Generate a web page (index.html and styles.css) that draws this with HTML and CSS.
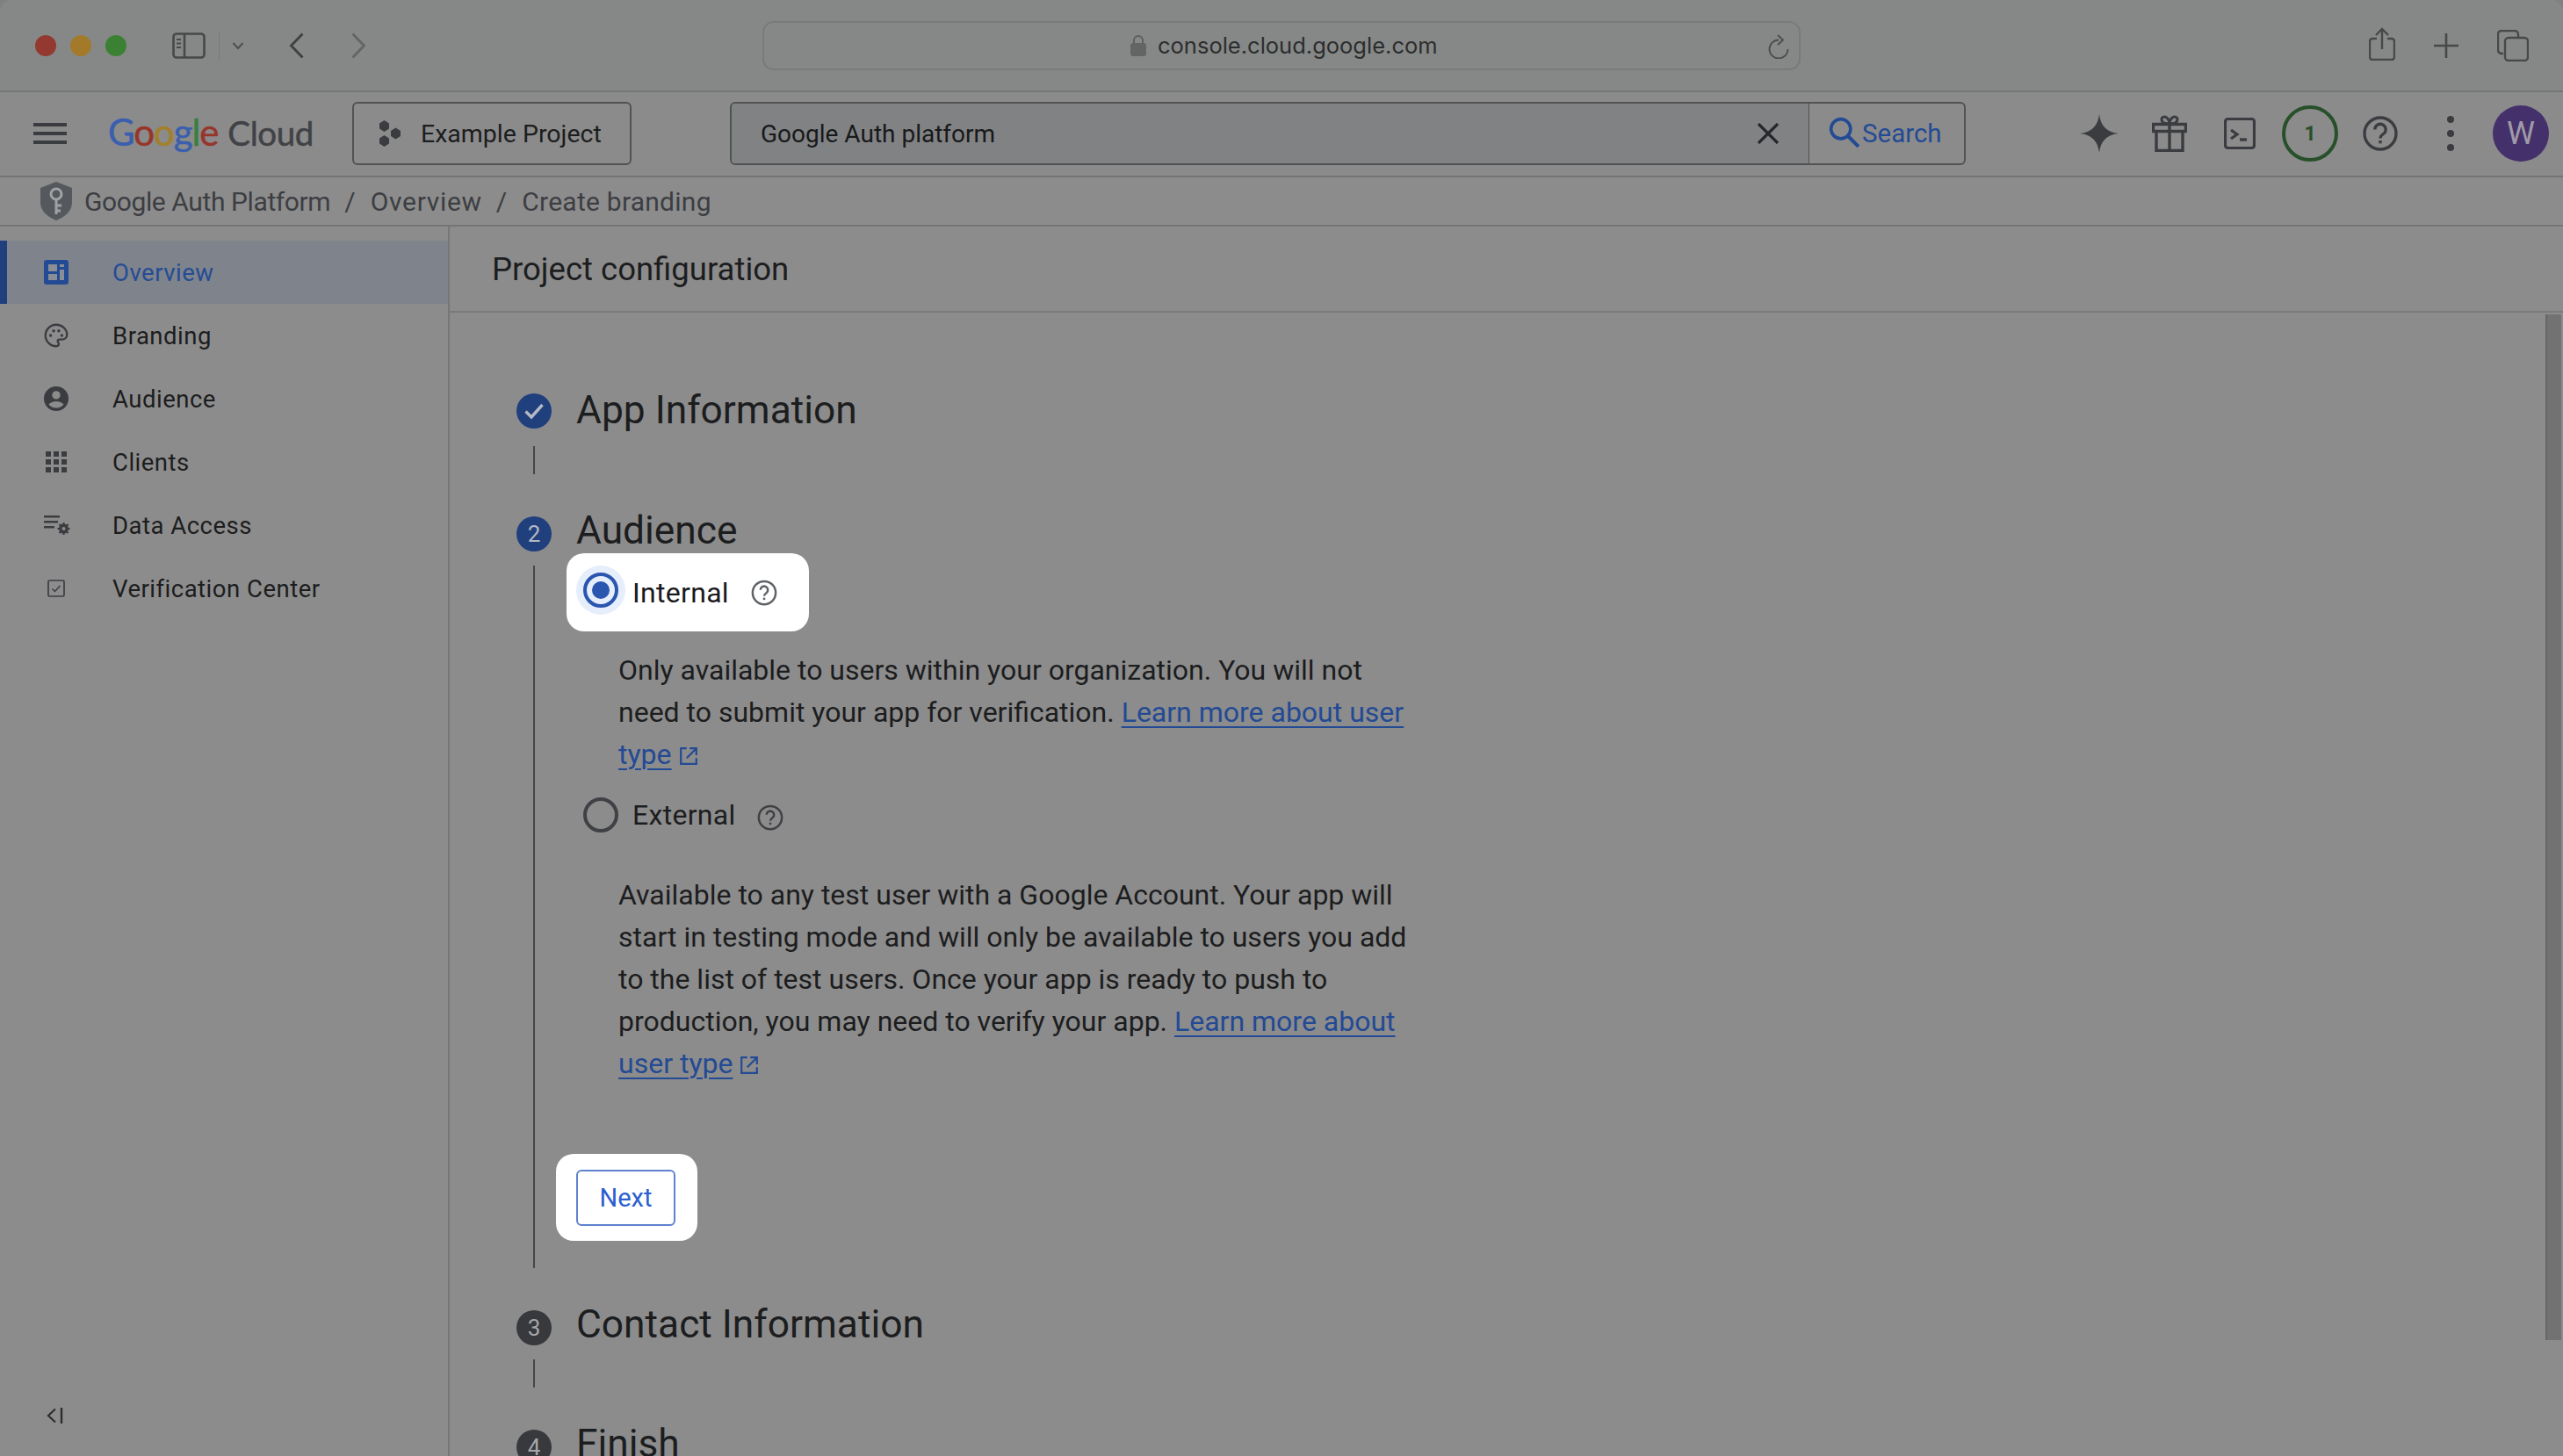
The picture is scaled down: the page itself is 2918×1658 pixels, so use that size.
FILE: index.html
```html
<!DOCTYPE html>
<html lang="en">
<head>
<meta charset="utf-8">
<title>Google Auth Platform</title>
<link rel="stylesheet" href="styles.css">
</head>
<body>
<div class="window">
  <header class="browser">
    <div class="lights"><span class="light red"></span><span class="light amber"></span><span class="light green"></span></div>
    <svg class="ic-side" viewBox="0 0 38 30"><rect x="1.5" y="1.5" width="35" height="27" rx="3.5" fill="none" stroke="#46484a" stroke-width="2.6"/><path d="M14 1.5v27" stroke="#46484a" stroke-width="2.6"/><path d="M5 8h5M5 12.5h5M5 17h5" stroke="#46484a" stroke-width="2"/></svg>
    <span class="side-div"></span>
    <svg class="ic-chev" viewBox="0 0 14 10"><path d="M1.5 2l5.5 6 5.5-6" fill="none" stroke="#4c4e50" stroke-width="2"/></svg>
    <svg class="ic-back" viewBox="0 0 18 30"><path d="M15.5 1.5L2.5 15l13 13.5" fill="none" stroke="#3e4042" stroke-width="2.8"/></svg>
    <svg class="ic-fwd" viewBox="0 0 18 30"><path d="M2.5 1.5L15.5 15l-13 13.5" fill="none" stroke="#626466" stroke-width="2.8"/></svg>
    <div class="urlbar">
      <div class="url-center">
        <svg class="ic-lock" viewBox="0 0 18 25"><path d="M4 11V7a5 5 0 0 1 10 0v4" fill="none" stroke="#5c5e60" stroke-width="2"/><rect y="10" width="18" height="15" rx="3" fill="#636565"/></svg>
        <span class="url-text">console.cloud.google.com</span>
      </div>
      <svg class="ic-reload" viewBox="0 0 24 28"><path d="M12 6.500A10.500 10.500 0 1 0 22.500 17" fill="none" stroke="#4a4c4e" stroke-width="1.800"/><path d="M11 1l6 5.500-6 5.500" fill="none" stroke="#4a4c4e" stroke-width="1.800"/></svg>
    </div>
    <div class="browser-right">
      <svg class="ic-share" viewBox="0 0 30 38"><path d="M9 13H4a3 3 0 0 0-3 3v18a3 3 0 0 0 3 3h22a3 3 0 0 0 3-3V16a3 3 0 0 0-3-3h-5M15 25V2M8 9l7-7 7 7" fill="none" stroke="#46484a" stroke-width="2.4"/></svg>
      <svg class="ic-plus" viewBox="0 0 28 28"><path d="M14 0v28M0 14h28" stroke="#46484a" stroke-width="2.6"/></svg>
      <svg class="ic-tabs" viewBox="0 0 36 36"><path d="M7 27H5a4 4 0 0 1-4-4V5a4 4 0 0 1 4-4h15a4 4 0 0 1 4 4v3" fill="none" stroke="#46484a" stroke-width="2.4"/><rect x="9" y="9" width="26" height="26" rx="4" fill="none" stroke="#46484a" stroke-width="2.4"/></svg>
    </div>
  </header>

  <div class="appbar">
    <svg class="ic-menu" viewBox="0 0 38 24"><path d="M0 2h38M0 12h38M0 22h38" stroke="#3a3c40" stroke-width="4"/></svg>
    <div class="logo"><span class="logo-google"><span class="c-b">G</span><span class="c-r">o</span><span class="c-y">o</span><span class="c-b">g</span><span class="c-g">l</span><span class="c-r">e</span></span><span class="logo-cloud">Cloud</span></div>
    <button class="project">
      <svg class="ic-proj" viewBox="0 0 26 30"><path d="M6.5 0l5.5 3.5v6L6.500 13 1 9.500v-6zM19.500 8.500l5.500 3.500v6l-5.500 3.500-5.500-3.500v-6zM6.500 17l5.500 3.500v6L6.500 30 1 26.500v-6z" fill="#3a3c40"/></svg>
      <span>Example Project</span>
    </button>
    <div class="search">
      <div class="search-input">
        <span class="search-text">Google Auth platform</span>
        <svg class="ic-clear" viewBox="0 0 26 24"><path d="M2 1l22 22M24 1L2 23" stroke="#26272a" stroke-width="3.200"/></svg>
      </div>
      <div class="search-btn">
        <svg class="ic-search" viewBox="0 0 34 34"><circle cx="13" cy="13" r="10.500" fill="none" stroke="#234a94" stroke-width="3.400"/><path d="M21 21l11 11" stroke="#234a94" stroke-width="3.800"/></svg>
        <span>Search</span>
      </div>
    </div>
    <div class="app-icons">
      <svg class="ic-spark" viewBox="0 0 44 44"><path d="M22 0c1.500 13 8 20.500 22 22-14 1.500-20.500 9-22 22-1.500-13-8-20.500-22-22 14-1.500 20.500-9 22-22z" fill="#3a3c40"/></svg>
      <svg class="ic-gift" viewBox="0 0 40 42"><path d="M1.500 10.500h37v8h-37zM5 18.500V40.500h30V18.500M20 10.500v30" fill="none" stroke="#3a3c40" stroke-width="3.400"/><path d="M20 10c-6 0-9-2-9-5s4-4 6-2 3 4 3 7zm0 0c6 0 9-2 9-5s-4-4-6-2-3 4-3 7z" fill="none" stroke="#3a3c40" stroke-width="3"/></svg>
      <svg class="ic-term" viewBox="0 0 36 36"><rect x="1.500" y="1.500" width="33" height="33" rx="3" fill="none" stroke="#3a3c40" stroke-width="3.200"/><path d="M8 14l7 5-7 5" fill="none" stroke="#3a3c40" stroke-width="3.200"/><path d="M18 25h8" stroke="#3a3c40" stroke-width="3.400"/></svg>
      <span class="badge">1</span>
      <svg class="ic-help" viewBox="0 0 24 24"><circle cx="12" cy="12" r="10.800" fill="none" stroke="#3a3c40" stroke-width="2"/><path d="M8.300 9.300a3.700 3.700 0 1 1 5.800 3c-1.300.9-2.100 1.500-2.100 3" fill="none" stroke="#3a3c40" stroke-width="2"/><path d="M11 16.800h2v2h-2z" fill="#3a3c40"/></svg>
      <svg class="ic-dots" viewBox="0 0 8 40"><circle cx="4" cy="4" r="4" fill="#3a3c40"/><circle cx="4" cy="20" r="4" fill="#3a3c40"/><circle cx="4" cy="36" r="4" fill="#3a3c40"/></svg>
      <span class="avatar">W</span>
    </div>
  </div>

  <nav class="crumbs">
    <svg class="ic-shield" viewBox="0 0 36 44"><path d="M18 0l18 7v17c0 9-8 16-18 20C8 40 0 33 0 24V7z" fill="#55585c"/><circle cx="18" cy="14" r="6" fill="none" stroke="#a0a2a4" stroke-width="3"/><path d="M18 20v17M18 27h6M18 33h5" stroke="#a0a2a4" stroke-width="3"/></svg>
    <span class="crumb crumb-root">Google Auth Platform</span><span class="sep">/</span><span class="crumb crumb-mid">Overview</span><span class="sep">/</span><span class="crumb crumb-last">Create branding</span>
  </nav>

  <div class="main">
    <aside class="sidebar">
      <a class="nav active">
        <svg class="nav-ic" viewBox="0 0 28 28"><rect width="28" height="28" rx="3" fill="#234a94"/><path d="M5 5h10v8H5zM5 16h10v7H5zM18 5h5v3h-5zM18 11h5v12h-5z" fill="#8a8e96"/></svg>
        <span>Overview</span>
      </a>
      <a class="nav">
        <svg class="nav-ic" viewBox="0 0 24 24"><path d="M12 1.500C6.200 1.500 1.500 6.200 1.500 12S6.200 22.500 12 22.500c1.600 0 2.500-1.100 2.500-2.300 0-.7-.3-1.200-.6-1.600-.3-.4-.5-.7-.5-1.100 0-.8.700-1.500 1.500-1.500h2.600c2.900 0 5-2.100 5-4.900 0-5.200-4.700-9.600-10.500-9.600z" fill="none" stroke="#3a3c40" stroke-width="2"/><circle cx="6.500" cy="12" r="1.500" fill="#3a3c40"/><circle cx="9.500" cy="7.500" r="1.500" fill="#3a3c40"/><circle cx="14.500" cy="7.500" r="1.500" fill="#3a3c40"/><circle cx="17.500" cy="12" r="1.500" fill="#3a3c40"/></svg>
        <span>Branding</span>
      </a>
      <a class="nav">
        <svg class="nav-ic" viewBox="0 0 24 24"><path fill-rule="evenodd" d="M12 0a12 12 0 1 0 0 24 12 12 0 0 0 0-24zm0 4.500a4 4 0 1 1 0 8 4 4 0 0 1 0-8zm0 16.500c-3 0-5.700-1.300-7.300-3.500 1.600-1.800 4.300-2.900 7.300-2.900s5.700 1.100 7.300 2.900C17.700 19.700 15 21 12 21z" fill="#3a3c40"/></svg>
        <span>Audience</span>
      </a>
      <a class="nav">
        <svg class="nav-ic nav-ic-grid" viewBox="0 0 24 24"><path d="M0 0h6v6H0zM9 0h6v6H9zM18 0h6v6h-6zM0 9h6v6H0zM9 9h6v6H9zM18 9h6v6h-6zM0 18h6v6H0zM9 18h6v6H9zM18 18h6v6h-6z" fill="#3a3c40"/></svg>
        <span>Clients</span>
      </a>
      <a class="nav">
        <svg class="nav-ic nav-ic-wide" viewBox="0 0 30 24"><path d="M0 1h18v2.500H0zM0 7h16v2.500H0zM0 13h12v2.500H0z" fill="#3a3c40"/><circle cx="22.500" cy="16" r="4" fill="none" stroke="#3a3c40" stroke-width="3"/><path d="M22.500 9v14M15.500 16h14M17.500 11l10 10M27.500 11l-10 10" stroke="#3a3c40" stroke-width="2.200"/><circle cx="22.500" cy="16" r="2" fill="#8c8c8c"/></svg>
        <span>Data Access</span>
      </a>
      <a class="nav">
        <svg class="nav-ic nav-ic-small" viewBox="0 0 20 20"><rect x="1" y="1" width="18" height="18" rx="1.500" fill="none" stroke="#3a3c40" stroke-width="1.700"/><path d="M5.500 10.500l3 3 6-6.500" fill="none" stroke="#3a3c40" stroke-width="1.500"/></svg>
        <span>Verification Center</span>
      </a>
      <svg class="ic-collapse" viewBox="0 0 19 18"><path d="M10 1.500L2 9l8 7.500" fill="none" stroke="#2c2e30" stroke-width="2.200"/><path d="M17 0v18" stroke="#2c2e30" stroke-width="2.400"/></svg>
    </aside>

    <section class="content">
      <h1 class="page-title">Project configuration</h1>
      <div class="scroll">
        <div class="thumb"></div>

        <div class="step step-first">
          <svg class="circle-svg" viewBox="0 0 40 40"><circle cx="20" cy="20" r="20" fill="#1f3f7d"/><path d="M10.500 20.500l6.500 6.500 12.500-14" fill="none" stroke="#b4b9c4" stroke-width="3.400"/></svg>
          <h2 class="step-title title-first">App Information</h2>
        </div>
        <div class="line line-first"></div>

        <div class="step step-gap">
          <span class="circle circle-blue">2</span>
          <h2 class="step-title">Audience</h2>
        </div>

        <div class="step-body">
          <div class="line-fill"></div>
          <div class="body-inner">
            <label class="radio-row radio-hl">
              <span class="radio-halo"><span class="radio radio-on"><span class="radio-dot"></span></span></span>
              <span class="radio-label label-hl">Internal</span>
              <svg class="ic-q ic-q-hl" viewBox="0 0 24 24"><circle cx="12" cy="12" r="10.500" fill="none" stroke="#5f6368" stroke-width="2"/><path d="M8.600 9.400a3.400 3.400 0 1 1 5.400 2.800c-1.200.8-2 1.400-2 2.800" fill="none" stroke="#5f6368" stroke-width="2"/><path d="M11 16.500h2v2h-2z" fill="#5f6368"/></svg>
            </label>
            <p class="desc desc-first">Only available to users within your organization. You will not need to submit your app for verification. <a class="link">Learn more about user type</a><svg class="ic-ext" viewBox="0 0 20 20"><path d="M8 2H2v16h16v-6M11 2h7v7M18 2L8 12" fill="none" stroke="#234a94" stroke-width="2"/></svg></p>
            <label class="radio-row radio-ext">
              <span class="radio-halo"><span class="radio"></span></span>
              <span class="radio-label">External</span>
              <svg class="ic-q" viewBox="0 0 24 24"><circle cx="12" cy="12" r="10.500" fill="none" stroke="#3f4144" stroke-width="2"/><path d="M8.600 9.400a3.400 3.400 0 1 1 5.400 2.800c-1.200.8-2 1.400-2 2.800" fill="none" stroke="#3f4144" stroke-width="2"/><path d="M11 16.500h2v2h-2z" fill="#3f4144"/></svg>
            </label>
            <p class="desc desc-second">Available to any test user with a Google Account. Your app will start in testing mode and will only be available to users you add to the list of test users. Once your app is ready to push to production, you may need to verify your app. <a class="link">Learn more about user type</a><svg class="ic-ext" viewBox="0 0 20 20"><path d="M8 2H2v16h16v-6M11 2h7v7M18 2L8 12" fill="none" stroke="#234a94" stroke-width="2"/></svg></p>
            <div class="next-hl"><button class="next">Next</button></div>
          </div>
        </div>

        <div class="step step-gap">
          <span class="circle">3</span>
          <h2 class="step-title">Contact Information</h2>
        </div>
        <div class="line"></div>
        <div class="step step-gap">
          <span class="circle">4</span>
          <h2 class="step-title">Finish</h2>
        </div>
      </div>
    </section>
  </div>
</div>
</body>
</html>
```

FILE: styles.css
```css
* { box-sizing: border-box; }
html, body { margin: 0; padding: 0; height: 100%; }
body { background: #7f807f; font-family: Roboto, "Liberation Sans", sans-serif; color: #1c1d1e; overflow: hidden; }
svg { display: block; flex: none; }
.window { width: 2918px; height: 1658px; display: flex; flex-direction: column; overflow: hidden; background: #8c8c8c; border-radius: 14px 14px 0 0; }

.browser { height: 105px; flex: none; display: flex; align-items: center; background: #868887; border-bottom: 2px solid #757777; padding: 0 39px 0 40px; position: relative; }
.lights { display: flex; gap: 16px; }
.light { width: 24px; height: 24px; border-radius: 50%; }
.red { background: #93392f; }
.amber { background: #a27a2a; }
.green { background: #3b8133; }
.ic-side { width: 38px; height: 30px; margin-left: 52px; }
.side-div { width: 1px; height: 34px; background: #797b7b; margin-left: 15px; }
.ic-chev { width: 14px; height: 10px; margin-left: 14px; }
.ic-back { width: 18px; height: 30px; margin-left: 51px; }
.ic-fwd { width: 18px; height: 30px; margin-left: 52px; }
.urlbar { width: 1182px; height: 56px; margin-left: 451px; border: 2px solid #797b7b; border-radius: 13px; display: flex; align-items: center; position: relative; }
.url-center { display: flex; align-items: center; gap: 13px; margin-left: 417px; }
.ic-lock { width: 18px; height: 25px; }
.url-text { font-family: Inter, sans-serif; font-size: 25.500px; color: #2c2d2e; }
.ic-reload { width: 24px; height: 28px; position: absolute; right: 11px; top: 13px; }
.browser-right { display: flex; align-items: center; margin-left: auto; }
.ic-share { width: 30px; height: 38px; margin-top: -4px; }
.ic-plus { width: 28px; height: 28px; margin-left: 44px; }
.ic-tabs { width: 36px; height: 36px; margin-left: 44px; }

.appbar { height: 97px; flex: none; display: flex; align-items: center; background: #8b8b8b; border-bottom: 2px solid #757575; padding: 0 16px 1px 38px; }
.ic-menu { width: 38px; height: 24px; }
.logo { margin-left: 47px; font-family: Lato, sans-serif; color: #404246; white-space: nowrap; width: 231px; margin-top: -5px; display: flex; align-items: baseline; gap: 11px; -webkit-text-stroke: .5px; }
.logo-google { font-size: 42px; letter-spacing: -1.100px; }
.logo-cloud { font-size: 38.500px; letter-spacing: -0.4px; }
.c-b { color: #3a5fae; }
.c-r { color: #97352b; }
.c-y { color: #a3802a; }
.c-g { color: #37803f; }
.project { margin-left: 47px; width: 318px; height: 72px; background: none; border: 2px solid #505254; border-radius: 6px; display: flex; align-items: center; padding: 0 0 0 28px; gap: 22px; font: 28.500px Roboto, sans-serif; color: #1c1d1e; }
.ic-proj { width: 26px; height: 30px; }
.search { margin-left: 112px; width: 1407px; height: 72px; display: flex; border: 2px solid #505254; border-radius: 6px; overflow: hidden; }
.search-input { flex: 1; background: #818284; display: flex; align-items: center; padding: 0 33px 0 33px; justify-content: space-between; border-right: 1px solid #505254; }
.search-text { font-size: 28px; color: #18191a; }
.ic-clear { width: 26px; height: 24px; }
.search-btn { width: 176px; display: flex; align-items: center; gap: 2px; padding-left: 22px; color: #234a94; font-size: 29.500px; }
.ic-search { width: 36px; height: 36px; margin-top: -2px; }
.app-icons { display: flex; align-items: center; margin-left: auto; }
.ic-spark { width: 44px; height: 44px; }
.ic-gift { width: 40px; height: 42px; margin-left: 38px; }
.ic-term { width: 36px; height: 36px; margin-left: 42px; }
.badge { width: 64px; height: 64px; margin-left: 30px; border: 4px solid #27502a; border-radius: 50%; display: flex; align-items: center; justify-content: center; font-weight: 700; font-size: 23px; color: #27502a; }
.ic-help { width: 40px; height: 40px; margin-left: 28px; }
.ic-dots { width: 8px; height: 40px; margin-left: 56px; }
.avatar { width: 64px; height: 64px; margin-left: 44px; border-radius: 50%; background: #44306a; color: #a09aa8; font-size: 36px; display: flex; align-items: center; justify-content: center; }

.crumbs { height: 56px; flex: none; display: flex; align-items: center; background: #8c8c8c; border-bottom: 2px solid #757575; padding-left: 46px; font-size: 30px; color: #3c3e42; }
.ic-shield { width: 36px; height: 44px; margin-right: 14px; }
.crumb-root { letter-spacing: -.4px; }
.crumb-mid { letter-spacing: .7px; }
.crumb-last { letter-spacing: .25px; }
.sep { margin: 0 17px 0 16px; }

.main { flex: 1; min-height: 0; display: flex; }
.sidebar { width: 512px; flex: none; padding-top: 16px; border-right: 2px solid #777; display: flex; flex-direction: column; }
.nav { height: 72px; flex: none; display: flex; align-items: center; font-size: 27.500px; letter-spacing: .5px; color: #1c1d1e; padding-left: 128px; position: relative; }
.nav-ic { width: 28px; height: 28px; position: absolute; left: 50px; top: 22px; }
.nav-ic-grid { width: 24px; height: 24px; left: 52px; top: 24px; }
.nav-ic-wide { width: 30px; height: 24px; top: 24px; }
.nav-ic-small { width: 20px; height: 20px; left: 54px; top: 26px; }
.active { background: #7e838c; color: #254c94; border-left: 8px solid #1f3f7d; padding-left: 120px; width: 510px; }
.active .nav-ic { left: 42px; }
.ic-collapse { width: 19px; height: 18px; margin: auto 0 37px 53px; }

.content { flex: 1; min-width: 0; display: flex; flex-direction: column; }
.page-title { margin: 0; height: 98px; flex: none; padding: 25px 0 0 48px; font: 400 36.500px/48px Roboto, sans-serif; color: #1c1d1e; border-bottom: 2px solid #7a7a7a; }
.scroll { flex: 1; min-height: 0; position: relative; overflow: hidden; padding: 92px 0 0 76px; }
.thumb { position: absolute; top: 2px; right: 2px; width: 18px; height: 1168px; background: #727272; border-left: 2px solid #666; }

.step { display: flex; align-items: flex-start; gap: 28px; height: 40px; }
.step-gap { margin-top: 48px; }
.circle-svg { width: 40px; height: 40px; }
.circle { width: 40px; height: 40px; flex: none; border-radius: 50%; background: #37393d; color: #a5a7a9; font-size: 26px; display: flex; align-items: center; justify-content: center; }
.circle-blue { background: #1f3f7d; color: #b4b9c4; }
.step-title { margin: -12px 0 0; font: 400 44.300px/56px Roboto, sans-serif; color: #1c1d1e; white-space: nowrap; }
.title-first { margin-top: -9px; }
.line { width: 2px; height: 32px; background: #45474a; margin: 16px 0 0 19px; }
.line-first { margin-top: 20px; }
.step-body { display: flex; margin-top: 16px; height: 800px; }
.line-fill { width: 2px; flex: none; background: #45474a; margin-left: 19px; }
.body-inner { margin: -14px 0 0 36px; width: 600px; }

.radio-row { display: flex; align-items: center; height: 56px; padding-left: 11px; }
.radio-hl { background: #fff; border-radius: 20px; width: 276px; height: 89px; padding-bottom: 5px; }
.radio-ext { margin-top: 17px; }
.radio-halo { width: 56px; height: 56px; flex: none; border-radius: 50%; display: flex; align-items: center; justify-content: center; }
.radio-hl .radio-halo { background: #e6edfb; }
.radio { width: 40px; height: 40px; border-radius: 50%; border: 4px solid #3f4144; display: flex; align-items: center; justify-content: center; }
.radio-on { border-color: #2a56b0; }
.radio-dot { width: 20px; height: 20px; border-radius: 50%; background: #2a56b0; }
.radio-label { margin-left: 8px; font-size: 32px; font-weight: 450; letter-spacing: .3px; color: #1c1d1e; }
.label-hl { color: #1a1a1c; margin-top: 5px; }
.ic-q { width: 30px; height: 30px; margin-left: 24px; margin-top: 5px; }
.ic-q-hl { margin-left: 25px; margin-top: 5px; }

.desc { margin: 0 0 0 59px; font-size: 32px; line-height: 48px; color: #1c1d1e; width: 900px; }
.desc-first { margin-top: 20px; }
.desc-second { margin-top: 39px; }
.link { color: #234a94; text-decoration: underline; text-decoration-thickness: 2px; text-underline-offset: 5px; }
.ic-ext { display: inline-block; width: 22px; height: 22px; margin-left: 8px; vertical-align: -2px; }

.next-hl { margin: 79px 0 0 -12px; width: 161px; height: 99px; background: #fff; border-radius: 20px; padding: 18px 0 0 23px; }
.next { width: 113px; height: 64px; background: #fff; border: 2px solid #5f82cf; border-radius: 6px; color: #2b5fd0; font: 400 29px Roboto, sans-serif; padding: 0; }
```
